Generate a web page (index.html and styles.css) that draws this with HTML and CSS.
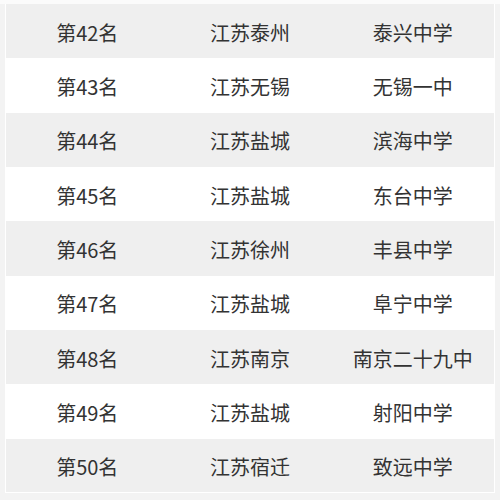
FILE: index.html
```html
<!DOCTYPE html>
<html lang="zh">
<head>
<meta charset="utf-8">
<link rel="stylesheet" href="styles.css">
</head>
<body>
<table class="rank">
<tbody>
<tr><td>第42名</td><td>江苏泰州</td><td>泰兴中学</td></tr>
<tr><td>第43名</td><td>江苏无锡</td><td>无锡一中</td></tr>
<tr><td>第44名</td><td>江苏盐城</td><td>滨海中学</td></tr>
<tr><td>第45名</td><td>江苏盐城</td><td>东台中学</td></tr>
<tr><td>第46名</td><td>江苏徐州</td><td>丰县中学</td></tr>
<tr><td>第47名</td><td>江苏盐城</td><td>阜宁中学</td></tr>
<tr><td>第48名</td><td>江苏南京</td><td>南京二十九中</td></tr>
<tr><td>第49名</td><td>江苏盐城</td><td>射阳中学</td></tr>
<tr><td>第50名</td><td>江苏宿迁</td><td>致远中学</td></tr>
</tbody>
</table>
</body>
</html>
```
FILE: styles.css
```css
html, body {
  margin: 0;
  padding: 0;
}
body {
  background: #f3f3f3;
  border-top: 4px solid #fbfbfb;
  padding: 0 5px 6px 5px;
  width: 490px;
}
.rank {
  width: 490px;
  border-collapse: collapse;
  border: 1px solid #ffffff;
  border-top: none;
  table-layout: fixed;
  font-family: "Noto Sans CJK SC", "Noto Sans", sans-serif;
  font-size: 20px;
  color: #333333;
}
.rank tr {
  height: 54.33px;
}
.rank td {
  box-sizing: border-box;
  height: 54.33px;
  padding: 3px 0 0 0;
  text-align: center;
  vertical-align: middle;
  line-height: 1;
}
.rank tr:nth-child(odd) {
  background: #efefef;
}
.rank tr:nth-child(even) {
  background: #ffffff;
}
```
